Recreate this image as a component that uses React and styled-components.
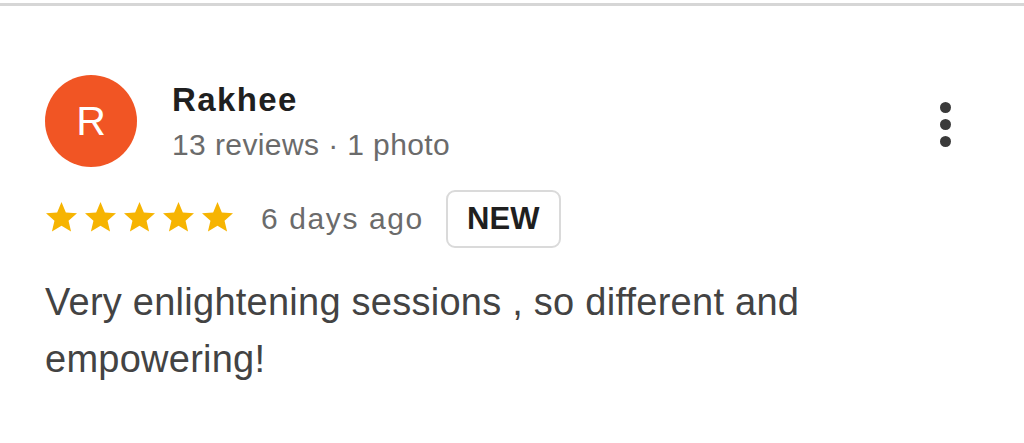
import React from "react";
import styled, { createGlobalStyle } from "styled-components";

const GlobalStyle = createGlobalStyle`
  html, body {
    margin: 0;
    padding: 0;
    background: #fff;
    font-family: "Liberation Sans", Arial, sans-serif;
  }
`;

const Page = styled.div`
  width: 1024px;
  height: 440px;
  overflow: hidden;
  background: #fff;
  border-top: 3px solid #d6d6d6;
  margin-top: 3px;
  box-sizing: border-box;
`;

const Card = styled.div`
  padding: 69px 46px 0 45px;
  display: flex;
  flex-direction: column;
`;

const Header = styled.div`
  display: flex;
  align-items: flex-start;
`;

const Avatar = styled.div`
  width: 92px;
  height: 92px;
  border-radius: 50%;
  background: ${(p) => p.color};
  color: #fff;
  display: flex;
  align-items: center;
  justify-content: center;
  font-size: 41px;
  flex-shrink: 0;
`;

const Who = styled.div`
  margin-left: 35px;
  display: flex;
  flex-direction: column;
  flex: 1;
`;

const Name = styled.div`
  font-size: 33px;
  font-weight: 700;
  color: #1f1f1f;
  line-height: 40px;
  margin-top: 5px;
  letter-spacing: 1.4px;
`;

const Meta = styled.div`
  font-size: 30px;
  color: #6b6b6b;
  line-height: 40px;
  margin-top: 5px;
  letter-spacing: 0.4px;
`;

const MenuButton = styled.div`
  display: flex;
  flex-direction: column;
  gap: 6px;
  margin-top: 27px;
  margin-right: 27px;
`;

const Dot = styled.span`
  width: 11px;
  height: 11px;
  border-radius: 50%;
  background: #3a3a3a;
`;

const RatingRow = styled.div`
  display: flex;
  align-items: center;
  margin-top: 23px;
`;

const Stars = styled.div`
  display: flex;
  gap: 8px;
  margin-left: 1px;
  margin-bottom: 5px;
`;

const Ago = styled.span`
  font-size: 30px;
  color: #6b6b6b;
  margin-left: 28px;
  letter-spacing: 1.6px;
`;

const Badge = styled.span`
  margin-left: 22px;
  border: 2px solid #dadada;
  border-radius: 9px;
  box-sizing: border-box;
  width: 115px;
  height: 58px;
  display: flex;
  align-items: center;
  justify-content: center;
  font-size: 31px;
  font-weight: 700;
  color: #1f1f1f;
`;

const Body = styled.p`
  margin: 26px 0 0 0;
  font-size: 38px;
  line-height: 57px;
  color: #434343;
  max-width: 820px;
  letter-spacing: 0.25px;
`;

const Star = () => (
  <svg width="31" height="30" viewBox="2 2 20 19.2">
    <path
      fill="#f6b402"
      d="M12 17.27L18.18 21l-1.64-7.03L22 9.24l-7.19-.61L12 2 9.19 8.63 2 9.24l5.46 4.73L5.82 21z"
    />
  </svg>
);

export default function App() {
  return (
    <>
      <GlobalStyle />
      <Page>
        <Card>
          <Header>
            <Avatar color="#f15524">R</Avatar>
            <Who>
              <Name>Rakhee</Name>
              <Meta>13 reviews · 1 photo</Meta>
            </Who>
            <MenuButton>
              <Dot />
              <Dot />
              <Dot />
            </MenuButton>
          </Header>
          <RatingRow>
            <Stars>
              {[0, 1, 2, 3, 4].map((i) => (
                <Star key={i} />
              ))}
            </Stars>
            <Ago>6 days ago</Ago>
            <Badge>NEW</Badge>
          </RatingRow>
          <Body>Very enlightening sessions , so different and empowering!</Body>
        </Card>
      </Page>
    </>
  );
}
